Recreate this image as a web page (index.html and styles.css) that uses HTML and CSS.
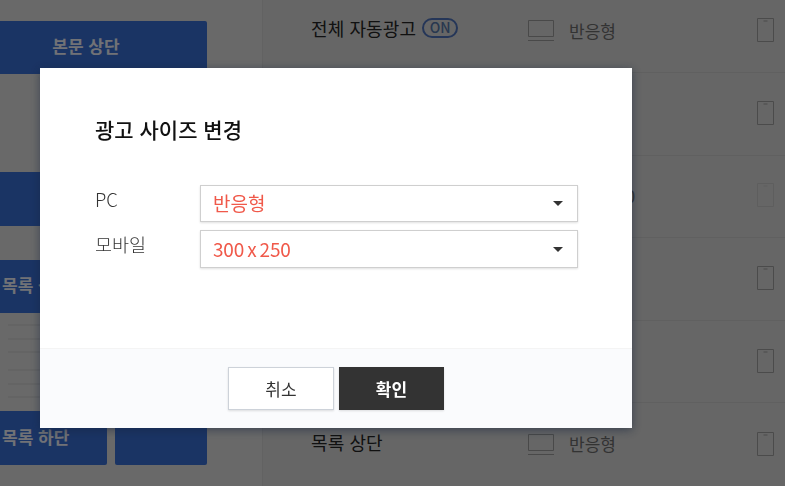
FILE: index.html
```html
<!DOCTYPE html>
<html lang="ko">
<head>
<meta charset="utf-8">
<title>광고 사이즈 변경</title>
<link rel="stylesheet" href="styles.css">
</head>
<body>
<div class="page">
  <aside class="side">
    <div class="slot slot-top">본문 상단</div>
    <div class="slot slot-mid"></div>
    <div class="slot slot-list">목록 상단</div>
    <ul class="lines"><li></li><li></li><li></li><li></li><li></li><li></li></ul>
    <div class="pair">
      <div class="slot slot-low">목록 하단</div>
      <div class="slot slot-small"></div>
    </div>
  </aside>
  <main class="table">
    <div class="row">
      <div class="name">전체 자동광고<span class="badge">ON</span></div>
      <svg class="monitor" viewBox="0 0 26 24"><path d="M.5 2.500h25v16H.5zM0 22.500h26"/></svg>
      <div class="size">반응형</div>
      <svg class="phone" viewBox="0 0 18 24"><path d="M.5.5h16v23H.5zM6.500 3h4"/></svg>
    </div>
    <div class="row">
      <div class="name">본문 상단</div>
      <svg class="monitor" viewBox="0 0 26 24"><path d="M.5 2.500h25v16H.5zM0 22.500h26"/></svg>
      <div class="size">반응형</div>
      <svg class="phone" viewBox="0 0 18 24"><path d="M.5.5h16v23H.5zM6.500 3h4"/></svg>
    </div>
    <div class="row">
      <div class="name">본문 중단</div>
      <svg class="monitor" viewBox="0 0 26 24"><path d="M.5 2.500h25v16H.5zM0 22.500h26"/></svg>
      <div class="size size-tight">300 x 250</div>
      <svg class="phone phone-off" viewBox="0 0 18 24"><path d="M.5.5h16v23H.5zM6.500 3h4"/></svg>
    </div>
    <div class="row">
      <div class="name">본문 하단</div>
      <svg class="monitor" viewBox="0 0 26 24"><path d="M.5 2.500h25v16H.5zM0 22.500h26"/></svg>
      <div class="size">반응형</div>
      <svg class="phone" viewBox="0 0 18 24"><path d="M.5.5h16v23H.5zM6.500 3h4"/></svg>
    </div>
    <div class="row">
      <div class="name">사이드</div>
      <svg class="monitor" viewBox="0 0 26 24"><path d="M.5 2.500h25v16H.5zM0 22.500h26"/></svg>
      <div class="size">반응형</div>
      <svg class="phone" viewBox="0 0 18 24"><path d="M.5.5h16v23H.5zM6.500 3h4"/></svg>
    </div>
    <div class="row">
      <div class="name">목록 상단</div>
      <svg class="monitor" viewBox="0 0 26 24"><path d="M.5 2.500h25v16H.5zM0 22.500h26"/></svg>
      <div class="size">반응형</div>
      <svg class="phone" viewBox="0 0 18 24"><path d="M.5.5h16v23H.5zM6.500 3h4"/></svg>
    </div>
  </main>
</div>

<div class="scrim">
  <section class="modal">
    <div class="modal-body">
      <h2 class="modal-title">광고 사이즈 변경</h2>
      <div class="form">
        <div class="label">PC</div>
        <div class="select"><span class="select-value">반응형</span><i class="caret"></i></div>
        <div class="label">모바일</div>
        <div class="select"><span class="select-value select-num">300 x 250</span><i class="caret"></i></div>
      </div>
    </div>
    <footer class="modal-foot">
      <button class="btn btn-cancel">취소</button>
      <button class="btn btn-ok">확인</button>
    </footer>
  </section>
</div>
</body>
</html>
```

FILE: styles.css
```css
* { box-sizing: border-box; }
html, body { margin: 0; padding: 0; height: 100%; overflow: hidden; }
body {
  font-family: "Noto Sans CJK KR", "Noto Sans", sans-serif;
  color: #333;
  background: #ccc;
}
.page { display: flex; height: 486px; overflow: hidden; }

/* left ad-placement map */
.side {
  flex: 0 0 263px;
  background: #d3d3d3;
  border-right: 1px solid #c4c4c4;
  padding-top: 21px;
  overflow: hidden;
}
.slot {
  background: #3568c8;
  border-radius: 2px;
  color: #e2e5ec;
  font-size: 17px;
  font-weight: 700;
  display: flex;
  align-items: center;
  justify-content: center;
  padding-bottom: 4px;
}
.slot-top { margin-left: -35px; width: 242px; height: 53px; }
.slot-mid { margin: 98px 0 0 -35px; width: 242px; height: 54px; }
.slot-list { margin: 34px 0 0 -37px; width: 144px; height: 53px; justify-content: flex-start; padding-left: 39px; }
.lines { list-style: none; margin: 0; padding: 11px 0 0 8px; height: 98px; }
.lines li { width: 90px; height: 2px; margin-bottom: 11.500px; background: #c8c8c8; }
.lines li:nth-child(3) { margin-bottom: 16px; }
.pair { display: flex; gap: 8px; margin-left: -37px; }
.slot-low { width: 144px; height: 54px; justify-content: flex-start; padding-left: 39px; }
.slot-small { width: 92px; height: 54px; }

/* right table */
.table { flex: 1; margin-top: -9.6px; }
.row {
  height: 82.6px;
  display: flex;
  align-items: center;
  padding: 0 10px 2px 48px;
  border-bottom: 1px solid #c0c0c0;
}
.row:last-child { border-bottom: 0; }
.name {
  width: 217px;
  margin-bottom: 4px;
  font-size: 18px;
  color: #222;
  display: flex;
  align-items: center;
  gap: 6px;
  line-height: 24px;
  letter-spacing: .1px;
}
.badge {
  width: 36px; height: 20px;
  border: 2px solid #4a6cb0;
  border-radius: 10px;
  color: #50709f;
  font-size: 14px;
  font-weight: 500;
  line-height: 15px;
  letter-spacing: 0;
  text-align: center;
}
.monitor { width: 26px; height: 24px; flex: none; fill: none; stroke: #939393; stroke-width: 1; }
.size { margin-left: 15px; font-size: 17px; color: #666; white-space: nowrap; width: 188px; flex: none; }
.size-tight { word-spacing: -3px; letter-spacing: -.3px; }
.phone { width: 18px; height: 24px; flex: none; fill: none; stroke: #969696; stroke-width: 1; }
.phone-off { stroke: #bcbcbc; }

/* modal */
.scrim {
  position: fixed;
  inset: 0;
  background: rgba(0, 0, 0, .5);
  padding: 68px 0 0 40px;
}
.modal {
  width: 592px;
  height: 360px;
  background: #fff;
  display: flex;
  flex-direction: column;
  box-shadow: 0 2px 9px rgba(20, 35, 60, .55);
}
.modal-body { flex: 1; padding: 46px 54px 0 55px; }
.modal-title { margin: 0; font-size: 21px; line-height: 30px; font-weight: 500; color: #111; }
.form {
  margin-top: 41px;
  display: grid;
  grid-template-columns: 105px 378px;
  grid-template-rows: 37px 38px;
  row-gap: 8px;
}
.label { font-size: 18.500px; font-weight: 300; color: #333; line-height: 28px; }
.select {
  border: 1px solid #cfcfcf;
  box-shadow: 0 1px 2px rgba(0, 0, 0, .12);
  padding: 0 14px 0 12px;
  display: flex;
  align-items: center;
  justify-content: space-between;
  color: #f0594a;
  font-size: 19px;
  font-weight: 400;
}
.select-value { margin-bottom: 2px; }
.select-num { word-spacing: -2px; letter-spacing: -.2px; }
.caret {
  width: 0; height: 0;
  border-left: 5px solid transparent;
  border-right: 5px solid transparent;
  border-top: 5px solid #333;
}
.modal-foot {
  flex: 0 0 80px;
  background: #fafbfd;
  border-top: 1px solid #f4f4f4;
  display: flex;
  justify-content: center;
  align-items: center;
  gap: 5px;
}
.btn {
  height: 43px;
  width: 106px;
  font-family: inherit;
  font-size: 17px;
  border-radius: 0;
  cursor: pointer;
}
.btn-cancel { background: #fff; color: #333; border: 1px solid #cdd2d9; box-shadow: 0 1px 2px rgba(0, 0, 0, .12); }
.btn-ok { width: 105px; background: #333; color: #fff; border: 0; font-weight: 700; box-shadow: 0 1px 2px rgba(0, 0, 0, .12); }
```
